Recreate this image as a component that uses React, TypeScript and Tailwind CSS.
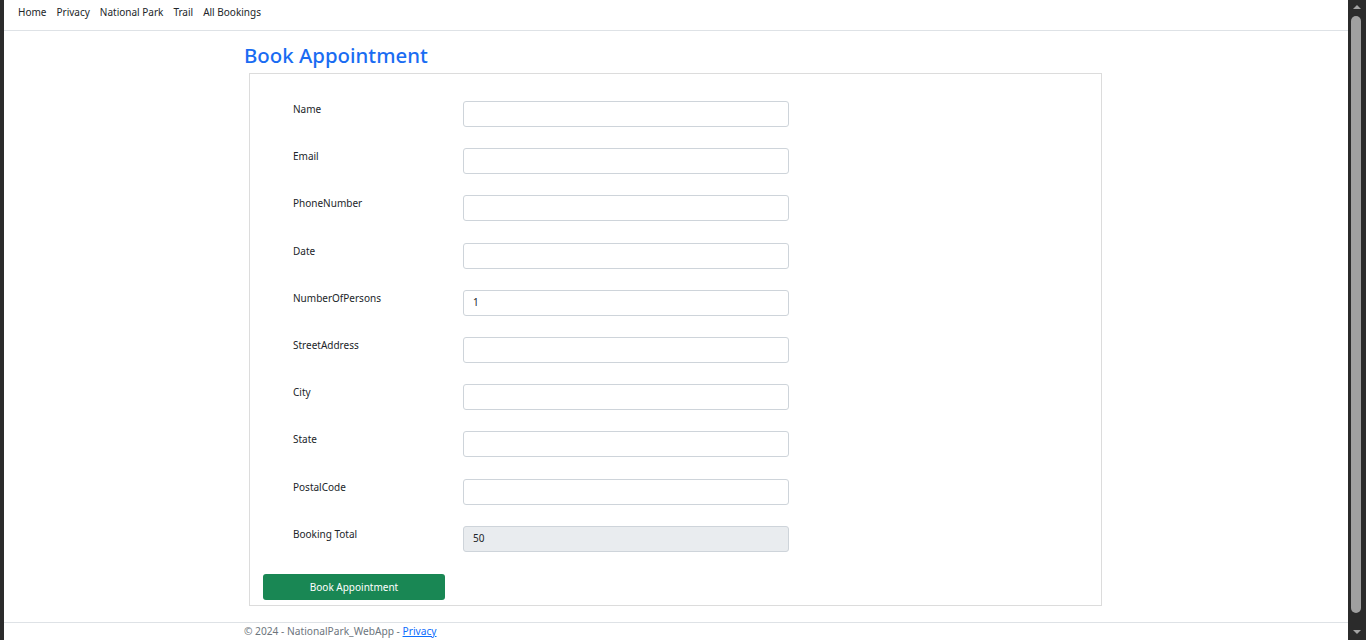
import React from "react";

const fields: { label: string; value?: string; disabled?: boolean }[] = [
  { label: "Name" },
  { label: "Email" },
  { label: "PhoneNumber" },
  { label: "Date" },
  { label: "NumberOfPersons", value: "1" },
  { label: "StreetAddress" },
  { label: "City" },
  { label: "State" },
  { label: "PostalCode" },
  { label: "Booking Total", value: "50", disabled: true },
];

const navLinks = ["Home", "Privacy", "National Park", "Trail", "All Bookings"];

const FieldRow: React.FC<{ label: string; value?: string; disabled?: boolean }> = ({ label, value, disabled }) => (
  <div className="flex items-start h-[26px] mb-[21.2px] pl-[30px]">
    <label className="w-[170px] text-[10px] leading-[16px] text-[#212529]">{label}</label>
    <div
      className={
        "w-[326px] h-[26px] rounded-[3px] border border-[#ced4da] flex items-center pl-[9px] text-[10px] text-[#212529] " +
        (disabled ? "bg-[#e9ecef]" : "bg-white")
      }
    >
      {value}
    </div>
  </div>
);

const Scrollbar: React.FC = () => (
  <div className="w-[18px] h-full bg-[#2b2b2b] flex flex-col items-center">
    <svg width="10" height="8" viewBox="0 0 10 8" className="mt-[3px]">
      <path d="M1 6 L5 2 L9 6 Z" fill="#a3a3a3" />
    </svg>
    <div className="w-[10px] flex-1 mt-[5px] mb-[15px] rounded-[5px] bg-[#a0a0a0] -translate-x-[1px]" />
    <svg width="10" height="8" viewBox="0 0 10 8" className="mb-[4px]">
      <path d="M1 2 L5 6 L9 2 Z" fill="#a3a3a3" />
    </svg>
  </div>
);

export default function App() {
  return (
    <div
      className="flex w-[1366px] h-[640px] overflow-hidden bg-white"
      style={{ fontFamily: '"Noto Sans", "Open Sans", sans-serif' }}
    >
      <div className="w-[4px] h-full bg-[#2b2b2b]" />
      <div className="flex-1 flex flex-col">
        <nav className="h-[31px] border-b border-[#dee2e6] flex items-center pl-[9px] shrink-0">
          {navLinks.map((l) => (
            <a key={l} className="px-[5px] text-[10px] text-[#212529] leading-[16px] -mt-[7px]">
              {l}
            </a>
          ))}
        </nav>
        <main className="pl-[240px] shrink-0">
          <h2 className="text-[20.4px] font-medium text-[#1a6cf2] leading-[26px] mt-[11px] mb-[5px]">
            Book Appointment
          </h2>
          <form className="ml-[5px] w-[853px] h-[533px] border border-[#dcdcdc] pt-[27px] px-[13px]">
            {fields.map((f) => (
              <FieldRow key={f.label} {...f} />
            ))}
            <button
              type="button"
              className="mt-[0.8px] w-[182px] h-[26px] rounded-[3px] bg-[#198754] text-white text-[10px]"
            >
              Book Appointment
            </button>
          </form>
        </main>
        <footer className="mt-[16px] border-t border-[#dee2e6] pl-[240px] text-[10.2px] leading-[16px] text-[#6c757d]">
          © 2024 - NationalPark_WebApp - <a className="text-[#0d6efd] underline">Privacy</a>
        </footer>
      </div>
      <Scrollbar />
    </div>
  );
}
